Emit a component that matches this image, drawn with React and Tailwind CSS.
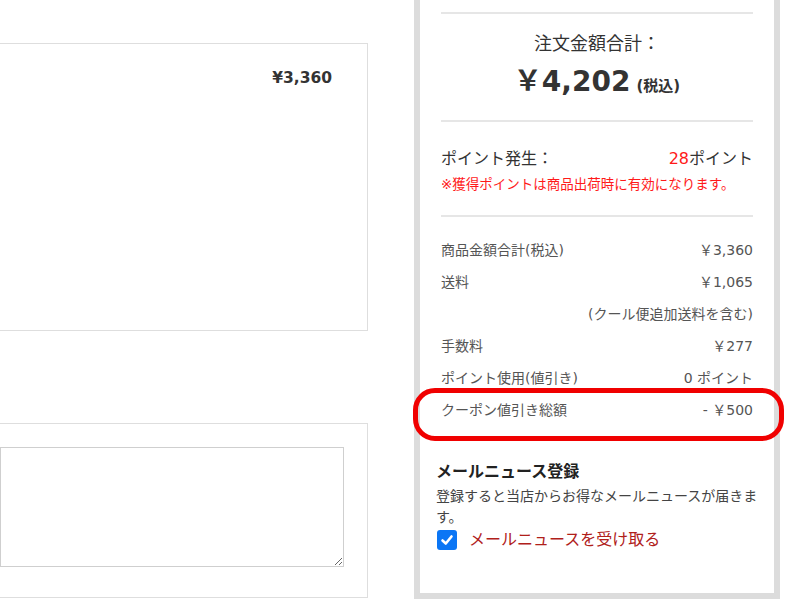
import React from "react";

const FONT = { fontFamily: '"DejaVu Sans", "Noto Sans CJK JP", sans-serif' };

const rows = [
  ["商品金額合計(税込)", "￥3,360"],
  ["送料", "￥1,065"],
  ["", "(クール便追加送料を含む)"],
  ["手数料", "￥277"],
  ["ポイント使用(値引き)", "0 ポイント"],
  ["クーポン値引き総額", "- ￥500"],
];

const App = () => {
  return (
    <div
      className="relative w-[800px] h-[600px] overflow-hidden bg-white flex text-[#333]"
      style={FONT}
    >
      {/* ================= LEFT ================= */}
      <div className="w-[368px] shrink-0 flex flex-col">
        <div className="mt-[43px] h-[288px] border border-l-0 border-[#dedede] pt-[23px] pr-[35px] flex justify-end">
          <span className="text-[15.5px] leading-[22px] font-bold text-[#333]">¥3,360</span>
        </div>

        <div className="mt-[92px] h-[175px] border border-l-0 border-[#dedede] pt-[23px] pr-[23px]">
          <textarea className="block w-full h-[120px] border border-[#cfcfcf] bg-white outline-none" />
        </div>
      </div>

      {/* ================= ORDER SUMMARY ================= */}
      <div className="ml-[46px] w-[366px] h-[599px] shrink-0 border-[6px] border-t-0 border-[#dcdcdc] flex flex-col">
        <div className="px-[21px] pt-[12px]">
          <div className="border-t-2 border-[#e6e6e6]" />

          <div className="mt-[17px] text-center text-[18px] leading-[26px] text-[#333]">
            注文金額合計：
          </div>
          <div className="mt-[5px] flex justify-center items-baseline text-[#333] font-bold">
            <span className="text-[28px] leading-[40px]">￥4,202</span>
            <span className="ml-[6px] text-[15px]">(税込)</span>
          </div>

          <div className="mt-[18px] border-t-2 border-[#e6e6e6]" />

          <div className="mt-[25px] flex justify-between text-[16px] leading-[24px]">
            <span className="text-[#333]">ポイント発生：</span>
            <span>
              <span className="text-[#ff1a1a]">28</span>
              <span className="text-[#333]">ポイント</span>
            </span>
          </div>
          <div className="mt-[3px] text-[13.5px] leading-[20px] text-[#ff1a1a]">
            ※獲得ポイントは商品出荷時に有効になります。
          </div>

          <div className="mt-[21px] border-t-2 border-[#e6e6e6]" />

          <div className="mt-[17px]">
            {rows.map(([label, value], i) => (
              <div
                key={i}
                className="h-[32px] flex items-center justify-between text-[14px] text-[#555]"
              >
                <span>{label}</span>
                <span>{value}</span>
              </div>
            ))}
          </div>
        </div>

        {/* ================= MAIL NEWS ================= */}
        <div className="px-[16px] mt-[34px]">
          <div className="text-[16px] leading-[24px] font-bold text-[#222]">
            メールニュース登録
          </div>
          <p className="mt-[2px] text-[14px] leading-[21px] text-[#444]">
            登録すると当店からお得なメールニュースが届きま
            <br />
            す。
          </p>
          <label className="flex items-center h-[24px]">
            <span className="w-[20px] h-[20px] ml-[1px] rounded-[3px] bg-[#0b76f5] flex items-center justify-center">
              <svg width="14" height="14" viewBox="0 0 14 14" fill="none">
                <path d="M2.5 7.5 L5.8 10.5 L11.5 3.5" stroke="white" strokeWidth="2.6" strokeLinecap="round" strokeLinejoin="round" />
              </svg>
            </span>
            <span className="ml-[12px] text-[16px] text-[#b0201a]">メールニュースを受け取る</span>
          </label>
        </div>
      </div>

      {/* highlight ring */}
      <div className="absolute left-[413px] top-[388px] w-[371px] h-[53px] border-[5px] border-[#f00000] rounded-[22px]" />
    </div>
  );
};

export default App;
